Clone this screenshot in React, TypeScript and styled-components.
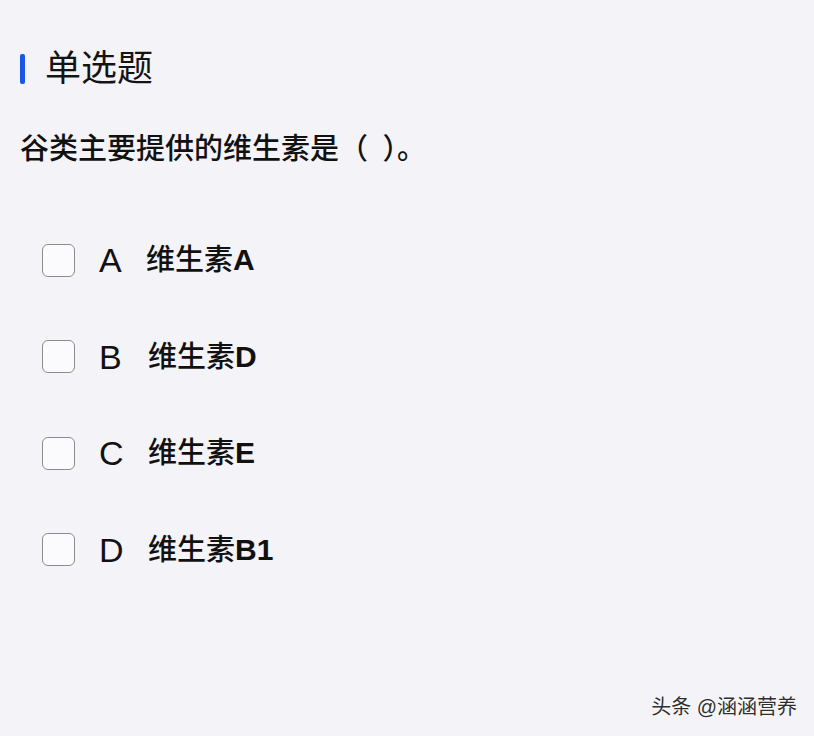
import React from 'react';
import styled, { createGlobalStyle } from 'styled-components';

const GlobalStyle = createGlobalStyle`
  html, body {
    margin: 0;
    padding: 0;
    background: #f4f3f7;
  }
  body {
    font-family: "Liberation Sans", "Noto Sans CJK SC", sans-serif;
    color: #111;
  }
`;

const Page = styled.div`
  width: 814px;
  height: 736px;
  box-sizing: border-box;
  padding: 49px 0 0 20px;
  display: flex;
  flex-direction: column;
  position: relative;
  overflow: hidden;
`;

const TitleRow = styled.div`
  display: flex;
  align-items: center;
  gap: 20px;
  height: 40px;
`;

const Marker = styled.span`
  width: 5px;
  height: 30px;
  border-radius: 2px;
  background: #1a56e8;
`;

const Title = styled.h2`
  margin: 0;
  font-size: 36px;
  font-weight: 400;
  line-height: 40px;
  color: #141414;
`;

const Question = styled.p`
  margin: 40px 0 0;
  font-size: 29px;
  font-weight: 500;
  line-height: 40px;
  color: #111;
`;

const Options = styled.div`
  display: flex;
  flex-direction: column;
  gap: 56.5px;
  margin-top: 71px;
  padding-left: 22px;
`;

const Option = styled.label`
  display: flex;
  align-items: center;
  height: 40px;
`;

const Box = styled.span`
  width: 31px;
  height: 31px;
  border: 1.5px solid #8c8c8c;
  border-radius: 6px;
  background: #fbfbfd;
  flex-shrink: 0;
`;

const Letter = styled.span`
  width: 26px;
  margin-left: 24px;
  font-size: 34px;
  font-weight: 400;
  line-height: 40px;
  color: #111;
`;

const Text = styled.span<{ $offset: number }>`
  margin-left: ${p => p.$offset}px;
  font-size: 29px;
  font-weight: 500;
  line-height: 40px;
  color: #111;
`;

const Suffix = styled.span`
  font-weight: 700;
  font-size: 30px;
`;

const Watermark = styled.div`
  position: absolute;
  right: 17px;
  bottom: 16px;
  font-size: 20px;
  color: #2e2e2e;
  text-shadow: 0 0 2px #fff, 0 0 1px #fff;
`;

const items = [
  { key: 'A', name: '维生素', suffix: 'A', offset: 21 },
  { key: 'B', name: '维生素', suffix: 'D', offset: 23 },
  { key: 'C', name: '维生素', suffix: 'E', offset: 23 },
  { key: 'D', name: '维生素', suffix: 'B1', offset: 23 },
];

export default function App() {
  return (
    <>
      <GlobalStyle />
      <Page>
        <TitleRow>
          <Marker />
          <Title>单选题</Title>
        </TitleRow>
        <Question>谷类主要提供的维生素是（{'\u2002'}）。</Question>
        <Options>
          {items.map(it => (
            <Option key={it.key}>
              <Box />
              <Letter>{it.key}</Letter>
              <Text $offset={it.offset}>
                {it.name}
                <Suffix>{it.suffix}</Suffix>
              </Text>
            </Option>
          ))}
        </Options>
        <Watermark>头条 @涵涵营养</Watermark>
      </Page>
    </>
  );
}
